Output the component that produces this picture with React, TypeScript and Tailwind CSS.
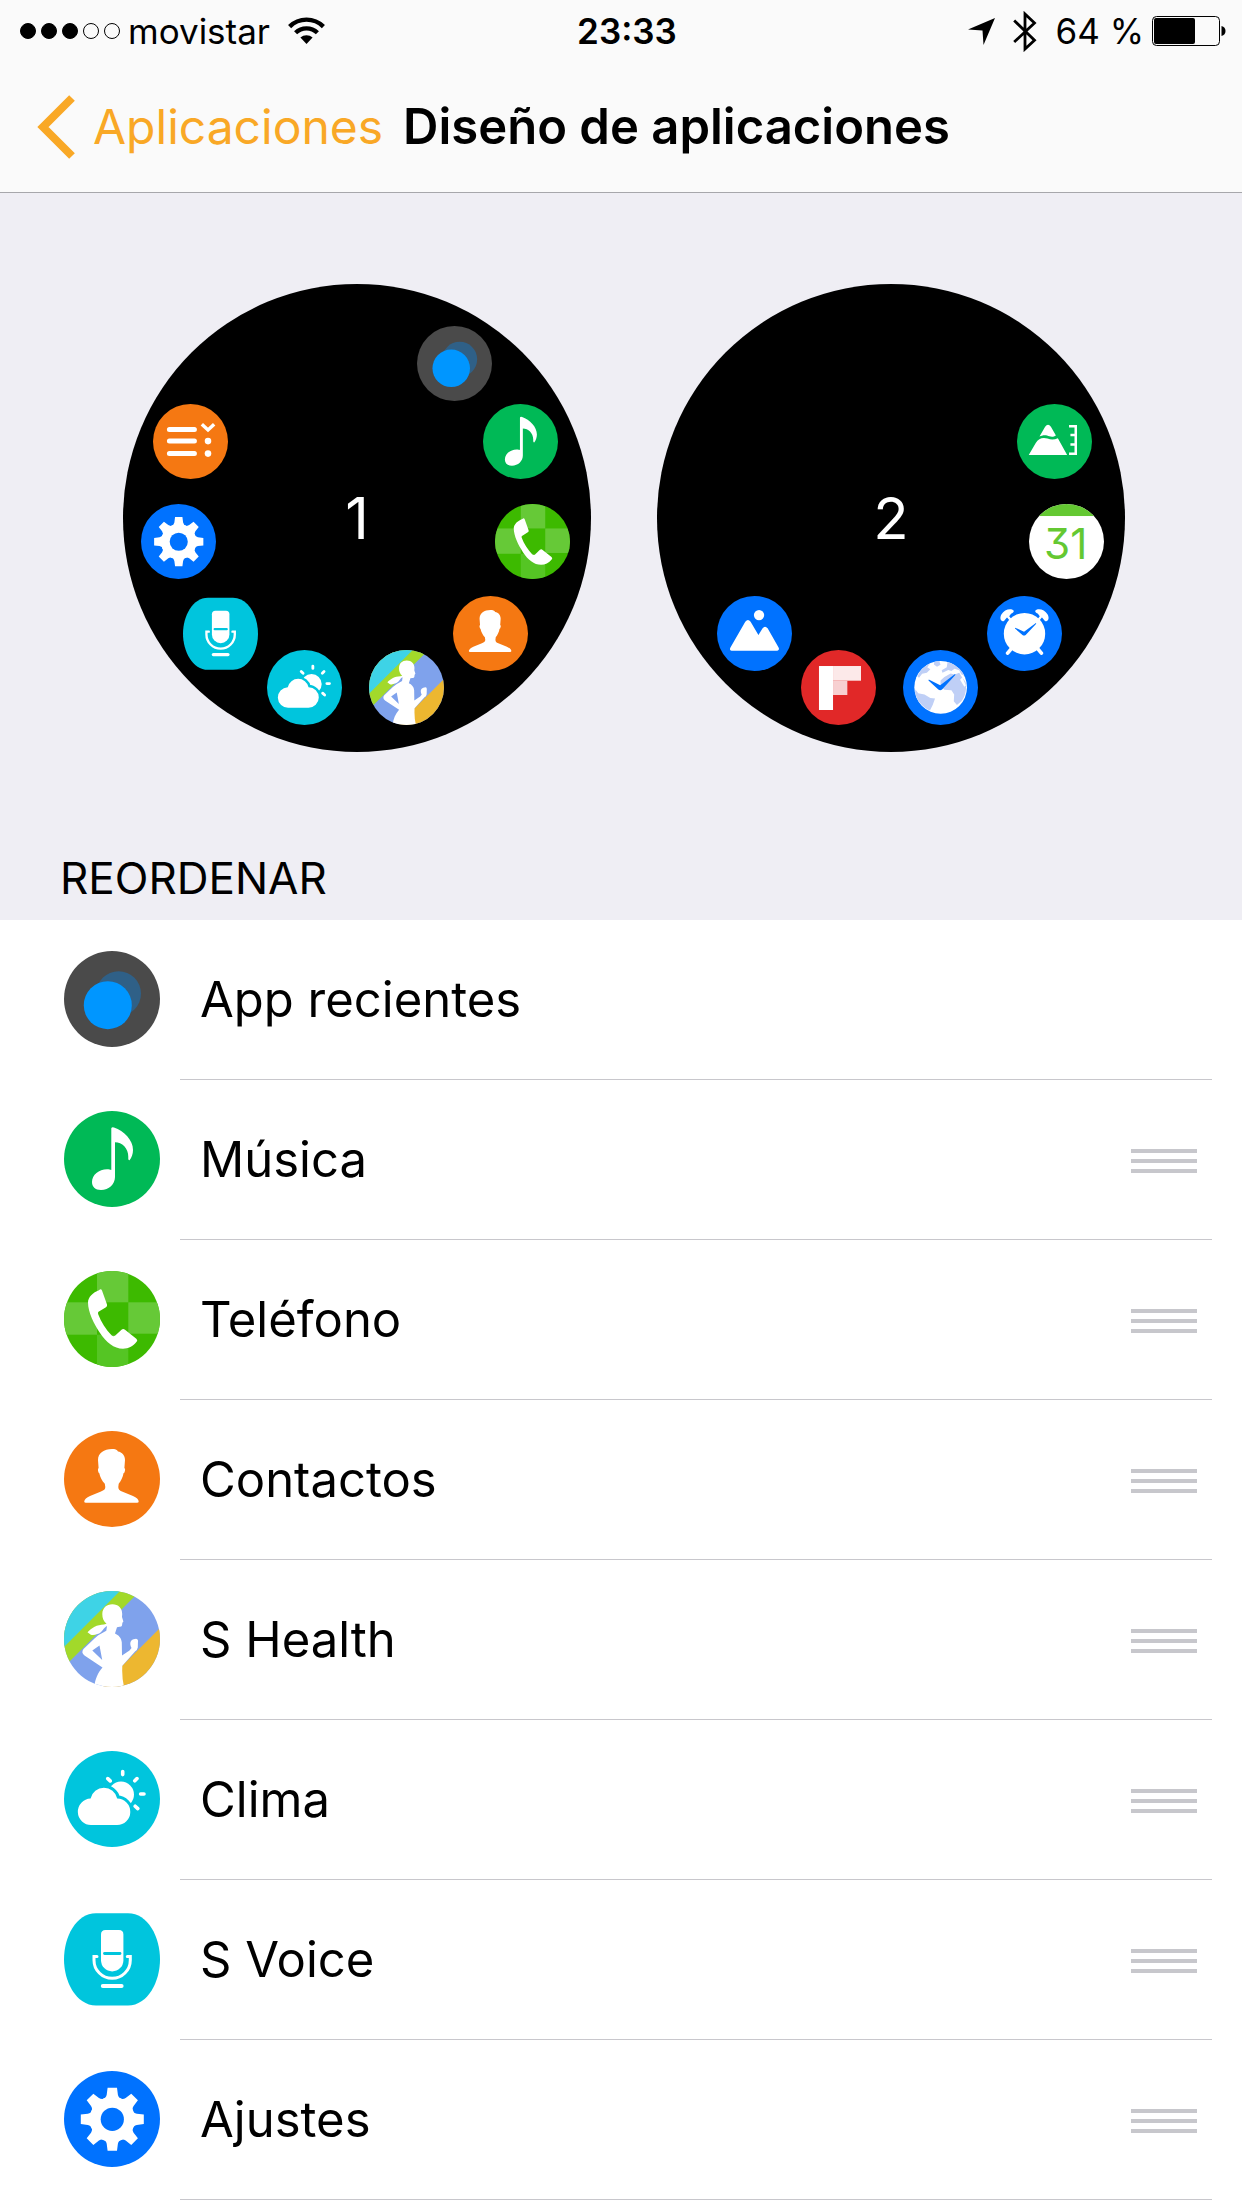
import React from 'react';
import clsx from 'clsx';

interface IconProps {
  className?: string;
}

interface WatchApp {
  name: string;
  icon: React.FC<IconProps>;
  locked?: boolean;
}

interface DiscProps extends IconProps {
  color: string;
  children: React.ReactNode;
}

const Disc: React.FC<DiscProps> = ({ color, className, children }) => (
  <svg viewBox="0 0 96 96" className={className} fill="white" aria-hidden="true">
    <circle cx="48" cy="48" r="48" fill={color} />
    {children}
  </svg>
);

const RecentIcon: React.FC<IconProps> = ({ className }) => (
  <Disc color="#4a4a4a" className={className}>
    <circle cx="54.6" cy="42.6" r="22.4" fill="#2f6087" />
    <circle cx="43.8" cy="54.2" r="24" fill="#0096ff" />
  </Disc>
);

const MusicIcon: React.FC<IconProps> = ({ className }) => (
  <Disc color="#00b956" className={className}>
    <path d="M47.3 17.2Q48 15.6 50 16.5C60 20 69 29 69 39C69 43 67.5 47 65.5 49.3Q64 49.5 64.3 46C64.5 37 58 31.5 51 31.3V66C51 73 45 79 37 79C31 79 28 75.5 28 71C28 64 35 58.3 43 58.3C45 58.3 46.3 58.6 47.3 59Z" />
  </Disc>
);

const PhoneIcon: React.FC<IconProps> = ({ className }) => (
  <svg viewBox="0 0 96 96" className={clsx(className, 'rounded-full')} aria-hidden="true">
    <rect width="96" height="96" fill="#3dba00" />
    <rect x="33" width="31.3" height="31.3" fill="#66c937" />
    <rect y="31.3" width="33" height="32.4" fill="#66c937" />
    <rect x="64.3" y="31.3" width="31.7" height="31.4" fill="#66c937" />
    <rect x="33" y="63.7" width="31.3" height="32.3" fill="#55c524" />
    <path
      fill="white"
      d="M35 19.2Q37 17.4 38 19.5L43 33.5Q43.6 35.3 42 36.3L34.5 40.8Q33.6 41.6 34.2 43.2C37 51 42 58.5 47.5 64.3Q49.5 66 51.3 64.5L57.5 58.7Q59.3 57.3 61 58.8L72.3 67.8Q74 69.3 72.8 70.6C69 75.5 64 77.8 59 77.8C50 77.8 42 71 36 62C30 53 24 41 24 31.5C24 26 29 21.5 35 19.2Z"
    />
  </svg>
);

const ContactsIcon: React.FC<IconProps> = ({ className }) => (
  <Disc color="#f57812" className={className}>
    <path d="M48 18C51 18 53 18.5 54 20.5C58 21 61 24.5 61 29L60.4 37Q61.5 37.5 61 39.5Q60.7 42 59.5 42.3C59 46 57 50 54.7 52.8L54.3 56C54.3 58.5 55.5 59.5 58 60.5L69 65C72.5 66.5 74.7 68.5 74.7 70.5Q74.7 71.8 73 71.8H22Q20.2 71.8 20.2 70.5C20.5 68.5 22.5 66.5 26 65L37 60.5C40 59.3 41.3 58.3 41.3 56L40.8 52.8C38 50 36 46 35.3 42.3Q34.3 42 34 39.5Q33.7 37.6 34.6 37L34 29C34 22 40 18 48 18Z" />
  </Disc>
);

const HealthIcon: React.FC<IconProps> = ({ className }) => (
  <svg viewBox="0 0 96 96" className={clsx(className, 'rounded-full')} aria-hidden="true">
    <rect width="96" height="96" fill="#7fa2ec" />
    <path d="M0 0H76L0 76Z" fill="#a2d92a" />
    <path d="M0 0H56L0 56Z" fill="#3ed3e6" />
    <path d="M96 37V96H37Z" fill="#edb730" />
    <path
      fill="white"
      fillRule="evenodd"
      d="M48.3 13.3C54.5 13.3 58.3 17.5 58.2 23L58 26L59.4 30.5L58.4 31.8L58 34.5Q57.5 36 55.5 35.8L53 36.2L51 42.5C54.5 44 57.5 47 57.8 51.5L58 64.5L65.5 59.5L67.5 57C65.5 53 66 49.5 69.5 48.3Q73.5 46.5 74 49.5L73.8 56.5Q73.3 59.3 71 60.5L58.3 74.7L58.2 80Q58.2 88 60 96H30.3C31 88 34 81.5 38.5 76.5L20.5 64.5Q16.8 61.5 19.5 58L30.5 47.5C33 45.2 34.8 43.8 37.4 42.5L42.3 39.8L43 34.9C39.4 36.4 38.6 41.6 33.4 43Q30 44.5 26.8 43.8L23.5 41.3C27.5 37 33 33.7 40 33.6L42.5 32.8C39.5 30.5 38.3 27 38.3 23C38.5 17 42.5 13.3 48.3 13.3ZM28.3 59.4L35.5 54.5L38.2 69Z"
    />
  </svg>
);

const CLOUD =
  'M27.5 74A13.2 13.2 0 0 1 26.6 47.6A13.6 13.6 0 0 1 53.2 47.6A13.2 13.2 0 0 1 53 74Z';

const WeatherIcon: React.FC<IconProps> = ({ className }) => (
  <Disc color="#00c5dd" className={className}>
    <circle cx="57" cy="43.6" r="13" />
    <path d="M68 52.5L60 66L66 66Z" fill="#00c5dd" />
    <path d={CLOUD} stroke="#00c5dd" strokeWidth="6" fill="#00c5dd" />
    <path d={CLOUD} />
    <path
      stroke="white"
      strokeWidth="3.6"
      strokeLinecap="round"
      d="M58.7 20.6V23.6M73 27.6L70.8 29.8M76.6 43H80M71.2 55.2L73.8 57.6M43.8 27.6L46.2 29.9"
    />
  </Disc>
);

const VoiceIcon: React.FC<IconProps> = ({ className }) => (
  <svg viewBox="0 0 96 96" className={className} aria-hidden="true">
    <path
      fill="#00c5dd"
      d="M32 2.2H64C84 2.2 96 26 96 48.3C96 70.6 84 94.5 64 94.5H32C12 94.5 0 70.6 0 48.3C0 26 12 2.2 32 2.2Z"
    />
    <path fill="white" d="M41.5 19H55Q59.4 19 59.4 23.5V49.2A11.2 11.2 0 0 1 37 49.2V23.5Q37 19 41.5 19Z" />
    <path stroke="#00c5dd" strokeWidth="2.8" strokeLinecap="round" d="M40.5 42.5H56" />
    <path fill="none" stroke="white" strokeWidth="3" strokeLinecap="round" d="M33 45.6H30V49.2A18.1 18.1 0 0 0 66.3 49.2V45.6H63.3" />
    <path stroke="white" strokeWidth="4" strokeLinecap="round" d="M38.8 75H57.6" />
  </svg>
);

const TOOTH_ANGLES = [0, 45, 90, 135, 180, 225, 270, 315];

const SettingsIcon: React.FC<IconProps> = ({ className }) => (
  <Disc color="#0072ff" className={className}>
    <circle cx="48.3" cy="48.3" r="22.6" />
    {TOOTH_ANGLES.map((angle) => (
      <path
        key={angle}
        d="M43.6 16.8H53L53.9 23.8Q54.5 27.2 58.2 28.4L48.3 48.3L38.4 28.4Q42.1 27.2 42.7 23.8Z"
        transform={`rotate(${angle} 48.3 48.3)`}
      />
    ))}
    <circle cx="48.3" cy="48.3" r="11.6" fill="#0072ff" />
  </Disc>
);

const RemindersIcon: React.FC<IconProps> = ({ className }) => (
  <Disc color="#f57812" className={className}>
    <path stroke="white" strokeWidth="6.4" strokeLinecap="round" d="M21 32.5H53M21 47.5H53M21 63.3H53" />
    <path fill="none" stroke="white" strokeWidth="4.4" d="M62.5 25.8L70.4 33.2L78.3 25.8" />
    <circle cx="70.4" cy="47.5" r="4.2" />
    <circle cx="70.4" cy="63.5" r="4.2" />
  </Disc>
);

const AltimeterIcon: React.FC<IconProps> = ({ className }) => (
  <Disc color="#00b956" className={className}>
    <path d="M15 65.3L24 50C27.5 44 33 42.5 39 44.3C44 46 48 45.6 52.3 43.8L64.2 65.3Z" />
    <path d="M28.8 41.6L36 29.2Q39.7 24 43.4 29.2L49.8 40.3C46 43 42 41.8 38.5 40.4C35 39.4 31.5 40.4 28.8 41.6Z" />
    <path fill="none" stroke="white" strokeWidth="3.2" d="M66.6 28.6H75.2V63.8H66.6M68.4 39.8H75M68.4 51.8H75" />
  </Disc>
);

const CalendarIcon: React.FC<IconProps> = ({ className }) => (
  <svg viewBox="0 0 96 96" className={clsx(className, 'rounded-full')} aria-hidden="true">
    <rect width="96" height="96" fill="white" />
    <rect width="96" height="15.4" fill="#64c832" />
    <text
      x="47"
      y="70.4"
      textAnchor="middle"
      fill="#64c832"
      className="font-['Inter',sans-serif] text-[54px] font-normal [font-feature-settings:'cv09']"
    >
      31
    </text>
  </svg>
);

const AlarmIcon: React.FC<IconProps> = ({ className }) => (
  <Disc color="#0072ff" className={className}>
    <circle cx="48" cy="48.3" r="26.5" />
    <path stroke="white" strokeWidth="4.6" strokeLinecap="round" d="M31.5 67L26.4 73.2M64.5 67L69.6 73.2" />
    <path stroke="white" strokeWidth="3" d="M26.5 26L32 33M69.5 26L64 33" />
    <path d="M20 32.3C16.6 31.6 16.4 27 18.6 23.4C21.4 18.6 27.4 16 32 17.3C35 18.2 35 20.4 32.6 21.6C29.4 22.8 29.6 25.4 27.4 26.4C24 27 23.2 32.4 20 32.3Z" />
    <path d="M76 32.3C79.4 31.6 79.6 27 77.4 23.4C74.6 18.6 68.6 16 64 17.3C61 18.2 61 20.4 63.4 21.6C66.6 22.8 66.4 25.4 68.6 26.4C72 27 72.8 32.4 76 32.3Z" />
    <path fill="#0072ff" d="M36.2 40.6L47.4 45.8L62.6 34.4L63 35.6L49.5 49.8Q47.4 51.5 45.4 49.9L35.8 41.6Z" />
  </Disc>
);

const WorldClockIcon: React.FC<IconProps> = ({ className }) => (
  <Disc color="#0072ff" className={className}>
    <circle cx="48.2" cy="47.8" r="33.7" />
    <g fill="#bfcff6">
      <path d="M18.5 34C21.5 26.5 27 20.5 34.5 17.5L31 22L35 24.5L30.5 29L24.5 30.5L20.5 35.5Z" />
      <path d="M40 15.2Q44 14 46.5 14.4L48 19L43.5 21.5L39.5 18.5Z" />
      <path d="M57 15.4C67 18.5 75 25 78.5 33L74.5 31L72 26L66 24L62 27L58 25.5L50.5 29L49.5 26L56 22Z" />
      <path d="M48 39L53 34.5L61 30L66 31.5L72 29L75.5 35L80 40.5C82 49 80 59 74.5 66L69 70.5L65 65.5L65.5 57L62 51.5L53 51L48 46Z" />
      <path d="M16 50.5L19.5 55.5L27.5 57L35 61.5L41 62L38 70.5L34.5 77.5C25 73 17.5 65 15.4 54Z" />
    </g>
    <path d="M73 38L78.5 47L80.5 45.5L76 35Z" fill="white" />
    <path fill="#0072ff" d="M33 37.8L47.6 45.2L66.6 30.6L67.2 31.8L50 50.6Q47.6 52.5 45.2 50.6L32.6 39Z" />
  </Disc>
);

const FlipboardIcon: React.FC<IconProps> = ({ className }) => (
  <Disc color="#e12828" className={className}>
    <rect x="23" y="20.5" width="18" height="56.3" />
    <rect x="41" y="20.5" width="35.8" height="18.8" fill="#fce9e9" />
    <rect x="41" y="39.3" width="18.3" height="18.3" fill="#f7d0d1" />
  </Disc>
);

const GalleryIcon: React.FC<IconProps> = ({ className }) => (
  <Disc color="#0072ff" className={className}>
    <circle cx="53.8" cy="24.4" r="6.6" />
    <path d="M18.6 70Q15.4 69.4 17.2 65.8L36.2 33Q39.6 28.4 43 33L53 49.8L58.4 41.4Q61.4 37.4 64.8 41.4L78.8 65.8Q80.4 69.4 77.2 70Z" />
  </Disc>
);

const apps: WatchApp[] = [
  { name: 'App recientes', icon: RecentIcon, locked: true },
  { name: 'Música', icon: MusicIcon },
  { name: 'Teléfono', icon: PhoneIcon },
  { name: 'Contactos', icon: ContactsIcon },
  { name: 'S Health', icon: HealthIcon },
  { name: 'Clima', icon: WeatherIcon },
  { name: 'S Voice', icon: VoiceIcon },
  { name: 'Ajustes', icon: SettingsIcon },
];

// Slots run clockwise from the one o'clock position of the dial
const slots = [
  'left-[294px] top-[42px]',
  'left-[360px] top-[120px]',
  'left-[372px] top-[220px]',
  'left-[330px] top-[312px]',
  'left-[246px] top-[366px]',
  'left-[144px] top-[366px]',
  'left-[60px] top-[312px]',
  'left-[18px] top-[220px]',
  'left-[30px] top-[120px]',
];

const pages: (React.FC<IconProps> | null)[][] = [
  [...apps.map((app) => app.icon), RemindersIcon],
  [null, AltimeterIcon, CalendarIcon, AlarmIcon, WorldClockIcon, FlipboardIcon, GalleryIcon],
];

const StatusBar: React.FC = () => (
  <div className="grid grid-cols-[1fr_auto_1fr] items-center h-[62px] pl-5 pr-4 text-[35px] leading-none">
    <div className="flex items-center">
      <div className="flex gap-[5px]">
        {[true, true, true, false, false].map((on, i) => (
          <span key={i} className={clsx('w-4 h-4 rounded-full border border-black', on && 'bg-black')} />
        ))}
      </div>
      <span className="ml-2">movistar</span>
      <svg viewBox="0 0 37 28" className="ml-[18px] w-[37px] h-7" fill="none" stroke="black" strokeWidth="4.4" aria-hidden="true">
        <path d="M1.6 9.6A24 24 0 0 1 35.4 9.6" />
        <path d="M7.6 15.8A15.6 15.6 0 0 1 29.4 15.8" />
        <path d="M18.5 27L12.4 20.6A9 9 0 0 1 24.6 20.6Z" fill="black" stroke="none" />
      </svg>
    </div>
    <span className="pl-2 font-semibold">23:33</span>
    <div className="flex items-center justify-end">
      <svg viewBox="0 0 27 27" className="w-[27px] h-[27px]" aria-hidden="true">
        <path d="M27 0L15.5 27L14.5 12.5L0 11.5Z" />
      </svg>
      <svg viewBox="0 0 24 41" className="ml-[18px] w-6 h-[41px]" fill="none" stroke="black" strokeWidth="2.8" aria-hidden="true">
        <path d="M1.2 9.5L21.5 29.2L12 38V3L21.5 12L1.2 31" />
      </svg>
      <span className="ml-[18px]">64 %</span>
      <svg viewBox="0 0 74 30" className="ml-2 w-[74px] h-[30px]" aria-hidden="true">
        <rect x="0.5" y="0.5" width="67" height="29" rx="4" fill="none" stroke="black" />
        <rect x="2" y="2" width="41" height="26" rx="2" />
        <path d="M69.5 10Q73.5 11 73.5 15Q73.5 19 69.5 20Z" />
      </svg>
    </div>
  </div>
);

const NavBar: React.FC = () => (
  <nav className="flex items-center h-[130px] pl-[37px] leading-[60px]">
    <button type="button" className="flex items-center gap-[18px] text-[48px] text-[#f9a826]">
      <svg viewBox="0 0 38 64" className="w-[38px] h-16" fill="none" stroke="currentColor" strokeWidth="8" aria-hidden="true">
        <path d="M35 3L6 32L35 61" />
      </svg>
      Aplicaciones
    </button>
    <h1 className="ml-5 text-[49px] font-semibold">Diseño de aplicaciones</h1>
  </nav>
);

interface WatchFaceProps {
  page: number;
  icons: (React.FC<IconProps> | null)[];
}

const WatchFace: React.FC<WatchFaceProps> = ({ page, icons }) => (
  <div className="relative flex items-center justify-center w-[468px] h-[468px] shrink-0 rounded-full bg-black text-[58px] text-white">
    {page}
    {icons.map((Icon, i) => Icon && <Icon key={i} className={clsx('absolute w-[75px] h-[75px]', slots[i])} />)}
  </div>
);

const AppRow: React.FC<{ app: WatchApp }> = ({ app }) => {
  const Icon = app.icon;

  return (
    <li className="flex items-center h-40 pl-16 pr-[30px]">
      <Icon className="w-24 h-24 mb-[2px] shrink-0" />
      <div className="flex flex-1 items-center justify-between h-full ml-5 pl-5 pr-[15px] border-b border-[#c8c7cc]">
        <span className="text-[49px]">{app.name}</span>
        {!app.locked && (
          <button type="button" aria-label={`Mover ${app.name}`} className="flex flex-col gap-[6px] pt-[2px] cursor-grab">
            <span className="w-[66px] h-1 bg-[#c7c7cc]" />
            <span className="w-[66px] h-1 bg-[#c7c7cc]" />
            <span className="w-[66px] h-1 bg-[#c7c7cc]" />
          </button>
        )}
      </div>
    </li>
  );
};

const App: React.FC = () => (
  <div className="min-h-screen bg-white font-['Inter',sans-serif] text-black">
    <header className="bg-[#fafafa] border-b border-[#a7a7ab]">
      <StatusBar />
      <NavBar />
    </header>
    <main>
      <section className="bg-[#efeef4] pt-[91px]">
        <div className="flex justify-center gap-[66px] pl-[6px]">
          {pages.map((icons, i) => (
            <WatchFace key={i} page={i + 1} icons={icons} />
          ))}
        </div>
        <h2 className="pt-[96px] pb-[12px] pl-[60px] text-[44px] leading-[60px]">REORDENAR</h2>
      </section>
      <ul>
        {apps.map((app) => (
          <AppRow key={app.name} app={app} />
        ))}
      </ul>
    </main>
  </div>
);

export default App;
